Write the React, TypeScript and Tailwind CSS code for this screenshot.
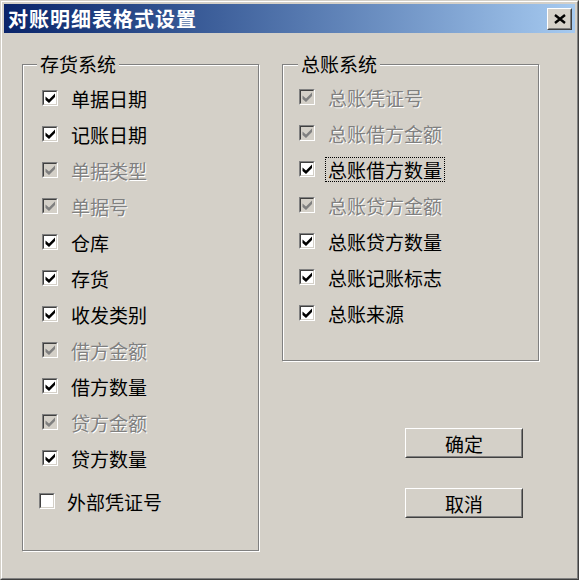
import React from "react";

const FONT = "font-['Noto_Sans_CJK_SC','Noto_Sans',sans-serif]";

function Tick({ color }: { color: string }) {
  return (
    <svg width="11" height="10" viewBox="0 0 11 10">
      <path d="M0.5 3.5 L4 6.5 L10 0.5 L10 4 L4 10 L0.5 7 Z" fill={color} />
    </svg>
  );
}

function Check({ checked, disabled }: { checked: boolean; disabled?: boolean }) {
  return (
    <span className="w-[16px] h-[16px] shrink-0 flex border border-t-[#808080] border-l-[#808080] border-b-white border-r-white">
      <span
        className={
          disabled
            ? "flex-1 flex items-center justify-center border border-t-[#404040] border-l-[#404040] border-b-[#d4d0c8] border-r-[#d4d0c8] bg-[#d4d0c8]"
            : "flex-1 flex items-center justify-center border border-t-[#404040] border-l-[#404040] border-b-[#d4d0c8] border-r-[#d4d0c8] bg-white"
        }
      >
        {checked && <Tick color={disabled ? "#808080" : "#000"} />}
      </span>
    </span>
  );
}

function Row({
  label,
  checked = true,
  disabled,
  focus,
}: {
  label: string;
  checked?: boolean;
  disabled?: boolean;
  focus?: boolean;
}) {
  return (
    <div className="h-[36px] flex items-center gap-[13px]">
      <Check checked={checked} disabled={disabled} />
      <span
        className={
          disabled
            ? "text-[19px] leading-[23px] text-[#808080] [text-shadow:1px_1px_0_#fff] whitespace-nowrap"
            : focus
            ? "text-[19px] leading-[23px] text-black border border-dotted border-black -ml-[3px] px-[2px] whitespace-nowrap"
            : "text-[19px] leading-[23px] text-black whitespace-nowrap"
        }
      >
        {label}
      </span>
    </div>
  );
}

function Button({ label }: { label: string }) {
  return (
    <button className="w-[118px] h-[30px] flex border border-t-white border-l-white border-b-[#404040] border-r-[#404040] bg-[#d4d0c8]">
      <span className="flex-1 h-full flex items-center justify-center border border-t-[#d4d0c8] border-l-[#d4d0c8] border-b-[#808080] border-r-[#808080] text-[19px] leading-[23px] text-black">
        {label}
      </span>
    </button>
  );
}

export default function App() {
  return (
    <div className={`${FONT} w-[579px] h-[580px] bg-[#d4d0c8] border border-t-[#d4d0c8] border-l-[#d4d0c8] border-b-[#404040] border-r-[#404040]`}>
      <div className="h-full border border-t-white border-l-white border-b-[#808080] border-r-[#808080] p-[2px] flex flex-col">
        <div className="h-[29px] shrink-0 flex items-center justify-between pl-[4px] pr-[3px] bg-gradient-to-r from-[#0a246a] to-[#a6caf0]">
          <span className="text-white font-bold text-[20px] leading-[24px] tracking-[1px]">对账明细表格式设置</span>
          <span className="w-[25px] h-[22px] flex border border-t-white border-l-white border-b-[#404040] border-r-[#404040] bg-[#d4d0c8]">
            <span className="flex-1 flex items-center justify-center border border-t-[#d4d0c8] border-l-[#d4d0c8] border-b-[#808080] border-r-[#808080]">
              <svg width="12" height="10" viewBox="0 0 12 10">
                <path d="M1 1 L11 9 M11 1 L1 9" stroke="#000" strokeWidth="2.4" />
              </svg>
            </span>
          </span>
        </div>
        <div className="flex-1 flex pl-[18px] pt-[31px] gap-[23px]">
          <div className="relative w-[237px] h-[487px] border border-[#808080] shadow-[inset_1px_1px_0_#fff,1px_1px_0_#fff] pl-[19px] pt-[15px]">
            <span className="absolute left-[14px] -top-[13px] px-[3px] bg-[#d4d0c8] text-[19px] leading-[24px] text-black">存货系统</span>
            <Row label="单据日期" />
            <Row label="记账日期" />
            <Row label="单据类型" disabled />
            <Row label="单据号" disabled />
            <Row label="仓库" />
            <Row label="存货" />
            <Row label="收发类别" />
            <Row label="借方金额" disabled />
            <Row label="借方数量" />
            <Row label="贷方金额" disabled />
            <Row label="贷方数量" />
            <div className="mt-[7px] -ml-[3px] h-[36px] flex items-center gap-[12px]">
              <Check checked={false} />
              <span className="text-[19px] leading-[23px] text-black">外部凭证号</span>
            </div>
          </div>
          <div className="flex flex-col">
            <div className="relative w-[257px] h-[297px] border border-[#808080] shadow-[inset_1px_1px_0_#fff,1px_1px_0_#fff] pl-[16px] pt-[14px]">
              <span className="absolute left-[15px] -top-[13px] px-[3px] bg-[#d4d0c8] text-[19px] leading-[24px] text-black">总账系统</span>
              <Row label="总账凭证号" disabled />
              <Row label="总账借方金额" disabled />
              <Row label="总账借方数量" focus />
              <Row label="总账贷方金额" disabled />
              <Row label="总账贷方数量" />
              <Row label="总账记账标志" />
              <Row label="总账来源" />
            </div>
            <div className="pl-[123px] mt-[67px] flex flex-col gap-[30px]">
              <Button label="确定" />
              <Button label="取消" />
            </div>
          </div>
        </div>
      </div>
    </div>
  );
}
